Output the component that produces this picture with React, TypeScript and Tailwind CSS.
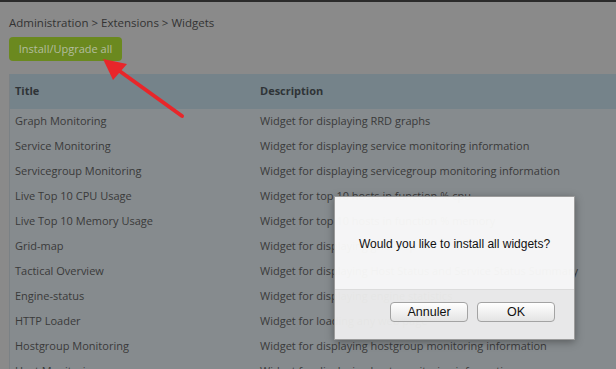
import React from "react"

interface Widget {
  title: string
  description: string
}

const widgets: Widget[] = [
  { title: "Graph Monitoring", description: "Widget for displaying RRD graphs" },
  { title: "Service Monitoring", description: "Widget for displaying service monitoring information" },
  { title: "Servicegroup Monitoring", description: "Widget for displaying servicegroup monitoring information" },
  { title: "Live Top 10 CPU Usage", description: "Widget for top 10 hosts in function % cpu" },
  { title: "Live Top 10 Memory Usage", description: "Widget for top 10 hosts in function % memory" },
  { title: "Grid-map", description: "Widget for displaying grid map" },
  { title: "Tactical Overview", description: "Widget for displaying Host Status and Service Status Summary" },
  { title: "Engine-status", description: "Widget for displaying engine statistics" },
  { title: "HTTP Loader", description: "Widget for loading any web page" },
  { title: "Hostgroup Monitoring", description: "Widget for displaying hostgroup monitoring information" },
  { title: "Host Monitoring", description: "Widget for displaying host monitoring information" },
]

function ConfirmDialog() {
  return (
    <div className="absolute left-[334px] top-[196px] w-[241px] h-[144px] flex flex-col border border-[#9c9c9c] shadow-[0_2px_8px_rgba(0,0,0,0.35)] font-['Liberation_Sans',Arial,sans-serif]">
      <div className="flex-1 flex items-center justify-center pt-[2px] bg-[#fafafa]/[0.96] text-[12px] text-[#111]">
        Would you like to install all widgets?
      </div>
      <div className="h-[50px] flex justify-end items-start gap-[9px] pt-[12px] pr-[19px] bg-[#ececec]/[0.96] border-t border-[#dcdcdc]">
        <button className="w-[78px] h-[20px] rounded-[4px] border border-[#a3a3a3] bg-gradient-to-b from-white to-[#e4e4e4] text-[12.5px] leading-none text-[#111]">
          Annuler
        </button>
        <button className="w-[78px] h-[20px] rounded-[4px] border border-[#a3a3a3] bg-gradient-to-b from-white to-[#e4e4e4] text-[12.5px] leading-none text-[#111]">
          OK
        </button>
      </div>
    </div>
  )
}

export default function App() {
  return (
    <div className="relative w-[616px] h-[369px] overflow-hidden bg-[#8a8a8a] font-['Open_Sans',sans-serif]">
      <div className="h-[2px] bg-[#2b2b2b]" />

      {/* breadcrumb */}
      <div className="mt-[13px] ml-[9px] text-[11.5px] leading-[16px] text-[#333]">
        Administration &gt; Extensions &gt; Widgets
      </div>

      <button className="block mt-[6px] ml-[9px] w-[113px] h-[24px] rounded-[4px] bg-[#6b891f] text-[11px] text-[#b3bd9f]">
        Install/Upgrade all
      </button>

      {/* widgets table */}
      <div className="mt-[13px] ml-[9px] w-[620px] border-l border-[#7b8185] bg-[#868b8e] text-[11px] text-[#3a3a3a]">
        <div className="h-[35px] flex items-center bg-[#75838a] font-bold text-[#2f3437]">
          <div className="w-[250px] pl-[5px]">Title</div>
          <div>Description</div>
        </div>
        {widgets.map((w) => (
          <div key={w.title} className="h-[25px] flex items-center whitespace-nowrap">
            <div className="w-[250px] pl-[5px]">{w.title}</div>
            <div>{w.description}</div>
          </div>
        ))}
      </div>

      {/* red arrow pointing at the button */}
      <svg className="absolute left-0 top-0" width="616" height="369" viewBox="0 0 616 369">
        <line x1="182" y1="116" x2="114" y2="67" stroke="#e8262a" strokeWidth="4" strokeLinecap="round" />
        <polygon points="103,59 127,64 113,80" fill="#e8262a" />
      </svg>

      <ConfirmDialog />
    </div>
  )
}
